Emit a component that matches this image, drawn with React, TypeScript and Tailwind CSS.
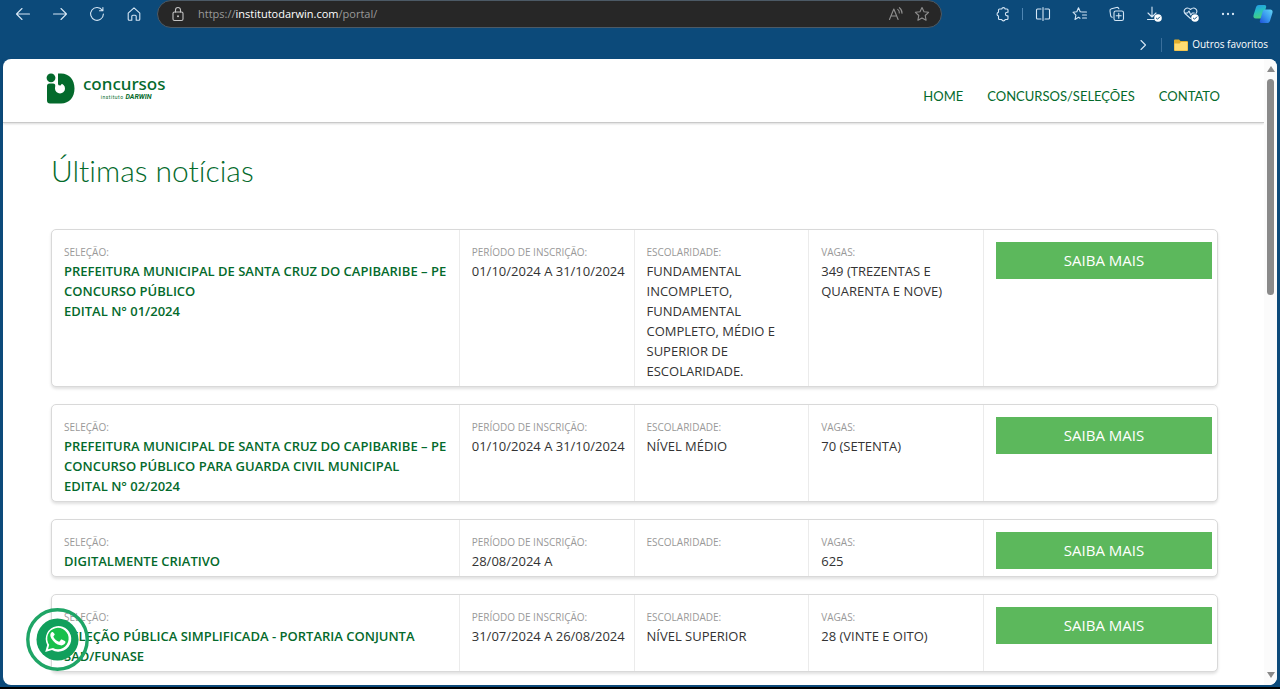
import type { ReactNode } from "react";

type Selection = {
  title: string[];
  period: string;
  schooling: string;
  vacancies: string;
};

const selections: Selection[] = [
  {
    title: ["PREFEITURA MUNICIPAL DE SANTA CRUZ DO CAPIBARIBE – PE", "CONCURSO PÚBLICO", "EDITAL N° 01/2024"],
    period: "01/10/2024 A 31/10/2024",
    schooling: "FUNDAMENTAL INCOMPLETO, FUNDAMENTAL COMPLETO, MÉDIO E SUPERIOR DE ESCOLARIDADE.",
    vacancies: "349 (TREZENTAS E QUARENTA E NOVE)",
  },
  {
    title: [
      "PREFEITURA MUNICIPAL DE SANTA CRUZ DO CAPIBARIBE – PE",
      "CONCURSO PÚBLICO PARA GUARDA CIVIL MUNICIPAL",
      "EDITAL N° 02/2024",
    ],
    period: "01/10/2024 A 31/10/2024",
    schooling: "NÍVEL MÉDIO",
    vacancies: "70 (SETENTA)",
  },
  { title: ["DIGITALMENTE CRIATIVO"], period: "28/08/2024 A", schooling: "", vacancies: "625" },
  {
    title: ["SELEÇÃO PÚBLICA SIMPLIFICADA - PORTARIA CONJUNTA SAD/FUNASE"],
    period: "31/07/2024 A 26/08/2024",
    schooling: "NÍVEL SUPERIOR",
    vacancies: "28 (VINTE E OITO)",
  },
];

function Icon({ children }: { children: ReactNode }) {
  return (
    <svg
      viewBox="0 0 16 16"
      className="size-4 shrink-0"
      fill="none"
      stroke="currentColor"
      strokeWidth="1.1"
      strokeLinecap="round"
      strokeLinejoin="round"
      aria-hidden="true"
    >
      {children}
    </svg>
  );
}

function ToolButton({ label, children }: { label: string; children: ReactNode }) {
  return (
    <button type="button" aria-label={label} className="flex h-7 w-[37px] shrink-0 items-center justify-center">
      {children}
    </button>
  );
}

function DoneBadge() {
  return (
    <>
      <circle cx="12" cy="12" r="3.8" fill="#fff" stroke="none" />
      <path d="M10.4 12.2l1.1 1 2.2-2.2" stroke="#0c4a7a" strokeWidth="1" />
    </>
  );
}

function BrowserBar() {
  return (
    <header className="text-[#d5e6f5]">
      <div className="flex items-center pl-1">
        <ToolButton label="Voltar">
          <Icon><path d="M14.5 8H1.5M7 2.5L1.5 8 7 13.5" /></Icon>
        </ToolButton>
        <ToolButton label="Avançar">
          <Icon><path d="M1.5 8h13M9 2.5L14.5 8 9 13.5" /></Icon>
        </ToolButton>
        <ToolButton label="Atualizar">
          <Icon><path d="M13.3 4.3A6.4 6.4 0 1 0 14.4 8M13.9 1.5v3.3h-3.4" /></Icon>
        </ToolButton>
        <ToolButton label="Página inicial">
          <Icon><path d="M2.2 7.2L8 1.8l5.800 5.400v6.100a1 1 0 0 1-1 1h-2.600V10.200a1 1 0 0 0-1-1H6.800a1 1 0 0 0-1 1v4.100H3.200a1 1 0 0 1-1-1z" /></Icon>
        </ToolButton>
        <div className="mr-[42px] ml-[5px] flex h-7 min-w-0 flex-1 items-center rounded-full border border-[#4c5a66] bg-[#272727] pr-2.5 pl-3 text-[#c4c4c4]">
          <Icon>
            <rect x="3" y="6" width="10" height="8.5" rx="1.5" />
            <path d="M5.5 6V4a2.5 2.5 0 0 1 5 0v2" />
            <circle cx="8" cy="10.3" r="1" fill="currentColor" stroke="none" />
          </Icon>
          <div className="ml-3 flex-1 font-['Open_Sans',sans-serif] text-[11px] text-[#9a9a9a]">
            https://<span className="text-white">institutodarwin.com</span>/portal/
          </div>
          <button type="button" aria-label="Ler em voz alta" className="flex w-[34px] justify-center text-[#8f8f8f]">
            <Icon>
              <path d="M1.5 13.5L5.8 3l4.300 10.500M3 10h5.600M9.700 3.400a4 4 0 0 1 1.600 3.600M11.400 1.700a6.500 6.500 0 0 1 2.600 5.600" />
            </Icon>
          </button>
          <button type="button" aria-label="Adicionar aos favoritos" className="flex w-[18px] justify-center text-[#8f8f8f]">
            <Icon><path d="M8 1.5l2 4.300 4.600.5-3.400 3.200.9 4.700L8 11.900l-4.100 2.300.9-4.700L1.400 6.300 6 5.800z" /></Icon>
          </button>
        </div>
        <ToolButton label="Extensões">
          <Icon>
            <path d="M4.500 3h2.200a1.800 1.800 0 0 1 3.500 0H12a1 1 0 0 1 1 1v2.300h-.8a1.800 1.800 0 0 0 0 3.600h.8V12.500a1 1 0 0 1-1 1h-1.800a1.800 1.800 0 0 1-3.500 0H4.500a1 1 0 0 1-1-1V10a1.900 1.900 0 0 1 0-3.700V4a1 1 0 0 1 1-1z" />
          </Icon>
        </ToolButton>
        <span className="mx-px h-3 w-px bg-[#4f86b3]" />
        <ToolButton label="Dividir tela">
          <Icon><path d="M6 3H2.500a1 1 0 0 0-1 1v8a1 1 0 0 0 1 1H6M10 3h3.500a1 1 0 0 1 1 1v8a1 1 0 0 1-1 1H10M8 1.500v13" /></Icon>
        </ToolButton>
        <ToolButton label="Favoritos">
          <Icon><path d="M10.500 6L8.200 5.800 6.500 1.800 4.800 5.800 1 6.200l2.900 2.900L3 13.500l3.500-2.200 1.500 1M10.500 6h4M10.500 9h4M10.500 12h4" /></Icon>
        </ToolButton>
        <ToolButton label="Coleções">
          <Icon>
            <rect x="5" y="5" width="9.5" height="9.5" rx="1.8" />
            <path d="M9.750 7.300v4.900M7.300 9.750h4.900M3.200 11.300a2 2 0 0 1-1.500-1.500L1 5a2 2 0 0 1 1.500-2.300l5-1.200a2 2 0 0 1 2.400 1.300" />
          </Icon>
        </ToolButton>
        <ToolButton label="Downloads">
          <Icon>
            <path d="M6 1v9.500M2 7l4 4 4-4M1.500 13.500H8" />
            <DoneBadge />
          </Icon>
        </ToolButton>
        <ToolButton label="Desempenho">
          <Icon>
            <path d="M7.500 12.500L2 7.500C-.5 4 3.500 0 7.500 3.500c4-3.500 8 .5 5.500 4M1.500 7h3l1.500-2 1.800 4L9.300 7h2" />
            <DoneBadge />
          </Icon>
        </ToolButton>
        <ToolButton label="Mais">
          <Icon>
            <circle cx="3" cy="8" r=".6" fill="currentColor" />
            <circle cx="8" cy="8" r=".6" fill="currentColor" />
            <circle cx="13" cy="8" r=".6" fill="currentColor" />
          </Icon>
        </ToolButton>
        <button type="button" aria-label="Copilot" className="flex w-[34px] shrink-0 justify-center">
          <svg viewBox="0 0 20 20" className="size-5" aria-hidden="true">
            <defs>
              <linearGradient id="copilotBack" x1="0" y1="0" x2="0.3" y2="1">
                <stop offset="0" stopColor="#2593e8" />
                <stop offset=".5" stopColor="#25bfc4" />
                <stop offset="1" stopColor="#46cf80" />
              </linearGradient>
              <linearGradient id="copilotFront" x1="1" y1="0" x2="0" y2="1">
                <stop offset="0" stopColor="#63d7f5" />
                <stop offset=".5" stopColor="#3a9bf0" />
                <stop offset="1" stopColor="#1e50d8" />
              </linearGradient>
            </defs>
            <path d="M6 1h5.500c1.500 0 2 1 1.600 2.300L10.500 12c-.5 1.700-1.500 2.500-3 2.500H2.800C.8 14.500 0 13 .6 11L3 3.300C3.500 1.800 4.500 1 6 1z" fill="url(#copilotBack)" />
            <path d="M14 19H8.500c-1.500 0-2-1-1.600-2.300L9.500 8c.5-1.700 1.500-2.500 3-2.500h4.700c2 0 2.800 1.500 2.200 3.500L17 16.700c-.5 1.500-1.500 2.300-3 2.300z" fill="url(#copilotFront)" />
          </svg>
        </button>
      </div>
      <div className="flex h-[31px] items-center justify-end pt-0.5 pr-3">
        <button type="button" aria-label="Mais favoritos" className="mr-2.5">
          <Icon><path d="M6 3.500L10.500 8 6 12.500" /></Icon>
        </button>
        <span className="mr-3 h-3.5 w-px bg-[#3a6f9c]" />
        <button type="button" className="flex items-center gap-1 font-['Open_Sans',sans-serif] text-[10px] text-white">
          <svg viewBox="0 0 14 12" className="h-3 w-3.5" aria-hidden="true">
            <path d="M0 1.500A1 1 0 0 1 1 .5h4l1.500 1.500H13a1 1 0 0 1 1 1V11a1 1 0 0 1-1 1H1a1 1 0 0 1-1-1z" fill="#e0ad2e" />
            <path d="M.5 4.500h5L7 3h6.500v8.500H.5z" fill="#ffdc73" />
          </svg>
          Outros favoritos
        </button>
      </div>
    </header>
  );
}

function Logo() {
  return (
    <a href="#inicio" aria-label="Concursos Instituto Darwin" className="flex items-center gap-2 text-[#046a2c]">
      <svg viewBox="0 0 29 31" className="h-[31px] w-[29px]" fill="currentColor" aria-hidden="true">
        <circle cx="5" cy="4.800" r="4.400" />
        <path d="M12 .5h3C23.500 .5 28.500 7 28.500 15.500S23.500 30.500 15 30.500H4A3 3 0 0 1 1 27.500V13a2.500 2.500 0 0 1 2.500-2.500h3.500A2.500 2.500 0 0 1 9.500 13L12 11z" />
        <circle cx="14" cy="15.500" r="5" fill="#fff" />
        <path d="M9.500 11H12v5H9.300z" fill="#fff" />
        <path d="M12 9.500V11q0 1.500 2.500 1.500l2-2.500z" />
      </svg>
      <span className="flex flex-col items-end">
        <span className="font-['Noto_Sans',sans-serif] text-[17px] leading-[18px] font-medium">concursos</span>
        <span className="flex items-center gap-0.5 pr-3.5 leading-[9px]">
          <span className="font-['Roboto',sans-serif] text-[5px] tracking-widest">instituto</span>
          <b className="font-['Liberation_Sans_Narrow',Roboto,sans-serif] text-[7px] italic">DARWIN</b>
        </span>
      </span>
    </a>
  );
}

function Field({ label, children }: { label: string; children: ReactNode }) {
  return (
    <div className="border-r border-[#ebebeb] pt-[13px] pr-1 pb-[5px] pl-3">
      <dt className="text-[10px] leading-[18px] text-[#999]">{label}</dt>
      <dd className="min-h-5 text-[13px] leading-5 text-[#333]">{children}</dd>
    </div>
  );
}

function SelectionCard({ item }: { item: Selection }) {
  return (
    <li className="flex rounded-[5px] border border-[#d9d9d9] bg-white shadow-[0_2px_3px_rgba(0,0,0,0.12)]">
      <dl className="grid w-4/5 grid-cols-[35fr_15fr_15fr_15fr]">
        <Field label="SELEÇÃO:">
          {item.title.map((line) => (
            <strong key={line} className="block font-semibold text-[#046a2c]">{line}</strong>
          ))}
        </Field>
        <Field label="PERÍODO DE INSCRIÇÃO:">{item.period}</Field>
        <Field label="ESCOLARIDADE:">
          <span className="block pr-5">{item.schooling}</span>
        </Field>
        <Field label="VAGAS:">{item.vacancies}</Field>
      </dl>
      <div className="w-1/5 pt-3 pr-[5px] pl-3">
        <a href="#detalhes" className="block bg-[#5cb85c] text-center text-[15px] leading-[37px] text-white">SAIBA MAIS</a>
      </div>
    </li>
  );
}

function Scrollbar() {
  return (
    <div className="flex w-[13px] shrink-0 flex-col items-center rounded-r-lg bg-[#fbfbfb] py-[7px]" aria-hidden="true">
      <svg viewBox="0 0 8 6" className="h-1.5 w-2"><path d="M4 0l4 6H0z" fill="#8a8a8a" /></svg>
      <div className="my-[7px] w-[7px] flex-1">
        <div className="h-[216px] rounded-full bg-[#8a8a8a]" />
      </div>
      <svg viewBox="0 0 8 6" className="h-1.5 w-2"><path d="M0 0h8L4 6z" fill="#8a8a8a" /></svg>
    </div>
  );
}

function WhatsAppButton() {
  return (
    <a href="#whatsapp" aria-label="WhatsApp" className="fixed bottom-[18px] left-[26px]">
      <svg viewBox="0 0 63 63" className="size-[63px]" aria-hidden="true">
        <circle cx="31.500" cy="31.500" r="29.700" fill="none" stroke="#1fa566" strokeWidth="3.400" />
        <circle cx="31.500" cy="31.500" r="21" fill="#119f5c" />
        <path d="M19.200 44l2-7.100A12.800 12.800 0 1 1 26 41.900z" fill="#fff" />
        <path d="M22 41.200l1.200-4.500A10.700 10.700 0 1 1 27 40z" fill="#18c04c" />
        <path d="M27.300 24.500c-.5-.6-1.500-.5-2 .1-1.400 1.500-1.300 3.600-.1 5.600 2.300 3.800 5.400 6.300 9.200 7.100 2.400.5 5-1 5.100-3.200 0-.6-.2-.8-.7-1.100l-3-1.400c-.5-.2-.8-.1-1.100.3l-1.200 1.500c-.3.300-.6.400-1 .2-2.300-1-3.900-2.500-5-4.600-.2-.4-.1-.6.200-1l.8-1c.2-.3.300-.6.100-1z" fill="#fff" />
      </svg>
    </a>
  );
}

export default function App() {
  return (
    <div className="flex min-h-screen flex-col border-b-2 border-black bg-[#0c4a7a]">
      <BrowserBar />
      <div className="mx-[3px] mb-0.5 flex flex-1 rounded-lg bg-white">
        <div className="min-w-0 flex-1 font-['Open_Sans',sans-serif]">
          <div className="flex h-16 items-center justify-between border-b border-[#c9c9c9] pr-11 pb-1 pl-[43px] shadow-[0_1px_2px_rgba(0,0,0,0.15)]">
            <Logo />
            <nav className="flex gap-6 pt-4 font-['Lato',sans-serif] text-[13px] text-[#046a2c]">
              <a href="#home">HOME</a>
              <a href="#concursos">CONCURSOS/SELEÇÕES</a>
              <a href="#contato">CONTATO</a>
            </nav>
          </div>
          <main className="pt-[27px] pr-[46px] pb-3 pl-12">
            <h1 className="mb-[39px] font-['Lato',sans-serif] text-[30px] leading-10 font-light text-[#046a2c] [font-variant-ligatures:none]">
              Últimas notícias
            </h1>
            <ul className="flex flex-col gap-[17px]">
              {selections.map((item, index) => (
                <SelectionCard key={index} item={item} />
              ))}
            </ul>
          </main>
        </div>
        <Scrollbar />
      </div>
      <WhatsAppButton />
    </div>
  );
}
